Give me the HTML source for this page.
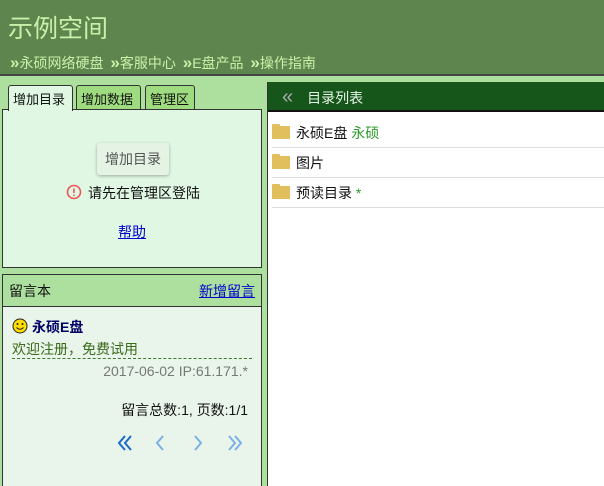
<!DOCTYPE html>
<html><head><meta charset="utf-8"><style>
*{margin:0;padding:0;box-sizing:border-box}
html,body{overflow:hidden;width:604px;height:486px}
body{background:#addf9f;font-family:"Liberation Sans","Noto Sans CJK SC",sans-serif;font-size:13px;color:#111;position:relative}
#hd{position:absolute;left:0;top:0;width:604px;height:76px;background:#5f854f;border-bottom:2px solid #444}
#hd h1{position:absolute;left:8px;top:9px;font-size:25px;font-weight:normal;color:#c9f0a8}
#hd .nav{position:absolute;left:10px;top:53px;font-size:14px;color:#c9f0a8;white-space:nowrap}
#hd .nav span{margin-right:3px}
#hd .nav b{font-size:17px;font-weight:bold;line-height:14px}
.tab{position:absolute;top:85px;height:25px;border:1px solid #333;border-bottom:none;border-radius:3px 3px 0 0;background:#9fdc7f;font-size:13px;padding:3px 4px 0}
.tab.on{background:#dff7e3;height:26px;z-index:2}
#tp{position:absolute;left:2px;top:109px;width:260px;height:159px;background:#dff7e3;border:1px solid #333;text-align:center}
.btn{position:absolute;left:94px;top:33px;width:72px;height:32px;background:#e4f3e4;border-radius:3px;box-shadow:0 1px 3px rgba(0,0,0,.3);color:#555;font-size:14px;line-height:32px}
#gb{position:absolute;left:2px;top:274px;width:260px;height:220px;background:#e9f5ea;border:1px solid #333}
#gb .h{height:32px;background:#addf9f;border-bottom:1px solid #333;font-size:14px;line-height:32px;padding:0 6px}
#rt{position:absolute;left:267px;top:82px;width:337px;height:404px;background:#fff;border-left:1px solid #333}
#rt .h{height:30px;background:#17561b;border-bottom:2px solid #111;color:#e6f5e6;font-size:14px;line-height:30px}
.row{position:absolute;left:4px;width:333px;height:30px;border-bottom:1px solid #ddd;font-size:14px;line-height:30px}
.fd{display:inline-block;width:18px;height:13px;background:#e0bf5c;vertical-align:-1px;margin-right:6px;position:relative}
.fd:before{content:"";position:absolute;left:0;top:-2px;width:8px;height:3px;background:#e0bf5c;border-radius:1px 1px 0 0}
</style></head><body>
<div id="hd"><h1>示例空间</h1><div class="nav"><span><b>»</b>永硕网络硬盘</span> <span><b>»</b>客服中心</span> <span><b>»</b>E盘产品</span> <span><b>»</b>操作指南</span></div></div>
<div class="tab on" style="left:8px;width:65px">增加目录</div>
<div class="tab" style="left:76px;width:65px">增加数据</div>
<div class="tab" style="left:145px;width:50px">管理区</div>
<div id="tp">
<div class="btn">增加目录</div>
<div style="position:absolute;left:63px;top:74px;font-size:14px;line-height:18px"><svg width="16" height="16" style="vertical-align:-2px;margin-right:6px"><circle cx="8" cy="8" r="6.5" fill="none" stroke="#e55" stroke-width="1.6"/><path d="M8 4.5 V9" stroke="#e55" stroke-width="1.6"/><circle cx="8" cy="11.3" r="0.9" fill="#e55"/></svg>请先在管理区登陆</div>
<div style="position:absolute;left:115px;top:112px;font-size:14px;color:#00c;text-decoration:underline">帮助</div>
</div>
<div id="gb"><div class="h">留言本<span style="float:right;color:#00c;text-decoration:underline">新增留言</span></div>
<div style="position:absolute;left:9px;top:42px;font-size:14px;font-weight:bold"><svg width="16" height="16" style="vertical-align:-2px;margin-right:4px"><circle cx="8" cy="8" r="7" fill="#fd0" stroke="#222"/><circle cx="5.5" cy="6" r="1" fill="#222"/><circle cx="10.5" cy="6" r="1" fill="#222"/><path d="M4.5 9.5 Q8 13 11.5 9.5" fill="none" stroke="#222"/></svg><span style="color:#006">永硕E盘</span></div>
<div style="position:absolute;left:9px;top:64px;width:240px;font-size:14px;color:#3a6a1a;border-bottom:1px dashed #3a7a2a;height:20px">欢迎注册，免费试用</div>
<div style="position:absolute;right:13px;top:88px;font-size:14px;color:#777">2017-06-02 IP:61.171.*</div>
<div style="position:absolute;right:13px;top:125px;font-size:14px">留言总数:1, 页数:1/1</div>
<svg style="position:absolute;left:114px;top:158px" width="130" height="20" fill="none" stroke-width="2">
<path d="M8 3 L2 10 L8 17 M14 3 L8 10 L14 17" stroke="#1a6acc"/>
<path d="M46 3 L40 10 L46 17" stroke="#7ab0e6"/>
<path d="M78 3 L84 10 L78 17" stroke="#7ab0e6"/>
<path d="M112 3 L118 10 L112 17 M118 3 L124 10 L118 17" stroke="#7ab0e6"/>
</svg>
</div>
<div id="rt"><div class="h"><span style="color:#aaa;font-size:20px;margin:0 14px 0 14px">«</span>目录列表</div>
<div class="row" style="top:36px"><span class="fd"></span>永硕E盘 <span style="color:#2a9a2a">永硕</span></div>
<div class="row" style="top:66px"><span class="fd"></span>图片</div>
<div class="row" style="top:96px"><span class="fd"></span>预读目录 <span style="color:#2a9a2a">*</span></div>
</div>
</body></html>
